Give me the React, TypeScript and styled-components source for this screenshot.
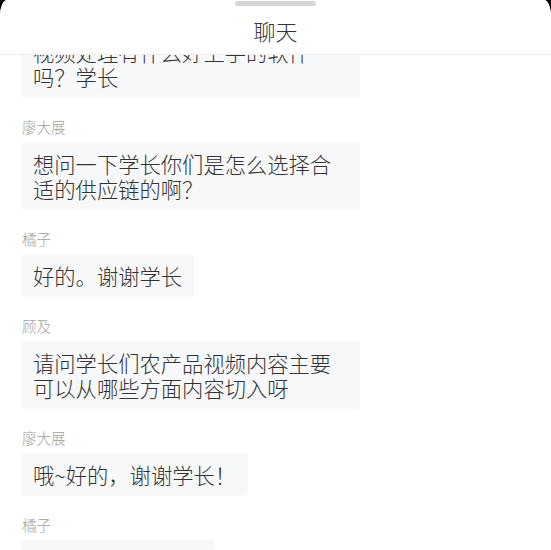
import React from "react";
import styled, { createGlobalStyle } from "styled-components";

const Global = createGlobalStyle`
  html, body { margin: 0; padding: 0; background: #000; }
  body { font-family: "Noto Sans CJK SC", "Noto Sans", sans-serif; }
`;

const Sheet = styled.div`
  width: 551px;
  height: 550px;
  background: #fff;
  border-top-left-radius: 7px 16px;
  border-top-right-radius: 7px 16px;
  overflow: hidden;
  display: flex;
  flex-direction: column;
`;

const Header = styled.header`
  flex: none;
  height: 53px;
  border-bottom: 1px solid #ededed;
  display: flex;
  flex-direction: column;
  align-items: center;
  padding-top: 1px;
  box-sizing: content-box;
  background: #fff;
`;

const Handle = styled.div`
  width: 81px;
  height: 5px;
  border-radius: 3px;
  background: #d6d6d8;
`;

const Title = styled.h1`
  margin: 0;
  font-size: 22px;
  font-weight: 300;
  line-height: 48px;
  color: #333;
`;

const Viewport = styled.div`
  flex: 1;
  overflow: hidden;
`;

const List = styled.div<{ $offset: number }>`
  display: flex;
  flex-direction: column;
  align-items: flex-start;
  gap: 20px;
  padding: 0 21px;
  margin-top: ${(p) => -p.$offset}px;
`;

const Message = styled.div`
  display: flex;
  flex-direction: column;
  align-items: flex-start;
  gap: 6px;
`;

const Name = styled.div`
  padding-left: 1px;
  font-size: 14.5px;
  font-weight: 300;
  line-height: 18px;
  color: #a0a0a0;
`;

const Bubble = styled.div`
  max-width: 339px;
  box-sizing: border-box;
  padding: 9px 12px;
  border-radius: 4px;
  background: #f7f8fa;
  font-size: 21.3px;
  font-weight: 300;
  line-height: 25px;
  color: #333;
  line-break: strict;
`;

const messages = [
  { name: "橘子", text: "视频处理有什么好上手的软件吗？学长" },
  { name: "廖大展", text: "想问一下学长你们是怎么选择合适的供应链的啊？" },
  { name: "橘子", text: "好的。谢谢学长" },
  { name: "顾及", text: "请问学长们农产品视频内容主要可以从哪些方面内容切入呀" },
  { name: "廖大展", text: "哦~好的，谢谢学长！" },
  { name: "橘子", text: "谢谢学长的分享！" },
];

export default function App() {
  return (
    <>
      <Global />
      <Sheet>
        <Header>
          <Handle />
          <Title>聊天</Title>
        </Header>
        <Viewport>
          <List $offset={49}>
            {messages.map((m, i) => (
              <Message key={i}>
                <Name>{m.name}</Name>
                <Bubble>{m.text}</Bubble>
              </Message>
            ))}
          </List>
        </Viewport>
      </Sheet>
    </>
  );
}
